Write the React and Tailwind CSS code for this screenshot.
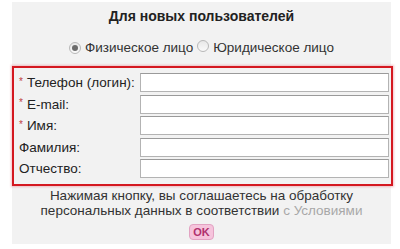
import React from "react";

const fields = [
  { label: "Телефон (логин):", required: true },
  { label: "E-mail:", required: true },
  { label: "Имя:", required: true },
  { label: "Фамилия:", required: false },
  { label: "Отчество:", required: false },
];

function Radio({ checked }) {
  return (
    <span className="inline-flex w-[12px] h-[12px] rounded-full border border-[#b8b8b8] bg-gradient-to-b from-[#e8e8e8] to-[#fafafa] items-center justify-center">
      {checked && <span className="w-[6px] h-[6px] rounded-full bg-[#6b6b6b]" />}
    </span>
  );
}

export default function App() {
  return (
    <div className="w-[400px] h-[249px] bg-white overflow-hidden font-['Liberation_Sans',Arial,sans-serif] text-[13px] text-[#222]">
      <div className="ml-[12px] w-[379px] mt-[2px] pt-[6px] pb-[4px] bg-[#f2f2f2]">
        <h2 className="text-center font-bold leading-[16px] text-[14px] text-[#222]">
          Для новых пользователей
        </h2>

        <div className="mt-[16px] flex items-center justify-center leading-[16px] text-[13.5px] text-[#333]">
          <Radio checked />
          <span className="ml-[4px]">Физическое лицо</span>
          <span className="ml-[4px]"><Radio /></span>
          <span className="ml-[4px]">Юридическое лицо</span>
        </div>

        <div className="mt-[10px] -mr-[2px] border-2 border-[#d41820] shadow-[0_0_2px_1px_rgba(230,120,130,0.45)] pt-[5px] pb-[6px] pl-[5px] pr-[2px] flex flex-col gap-[2.5px]">
          {fields.map((f) => (
            <div key={f.label} className="flex items-center h-[19px]">
              <div className="w-[121px] flex items-center text-[13.5px] text-[#222] leading-[19px]">
                {f.required && (
                  <span className="text-[#c0403f] text-[10px] mr-[4px] -mt-[3px]">*</span>
                )}
                <span>{f.label}</span>
              </div>
              <div className="flex-1 h-[19px] bg-white border border-[#b3b3b3] border-t-[#9a9a9a]" />
            </div>
          ))}
        </div>

        <p className="mt-[2px] text-center leading-[15px] text-[13.5px] text-[#333]">
          Нажимая кнопку, вы соглашаетесь на обработку
          <br />
          персональных данных в соответствии{" "}
          <span className="text-[#a8a8a8]">с Условиями</span>
        </p>

        <div className="mt-[6px] flex justify-center">
          <button className="h-[16px] px-[3px] rounded-[4px] bg-[#f6c4dc] border border-[#e2a3c2] text-[11px] font-bold leading-[14px] text-[#b0306e]">
            OK
          </button>
        </div>
      </div>
    </div>
  );
}
